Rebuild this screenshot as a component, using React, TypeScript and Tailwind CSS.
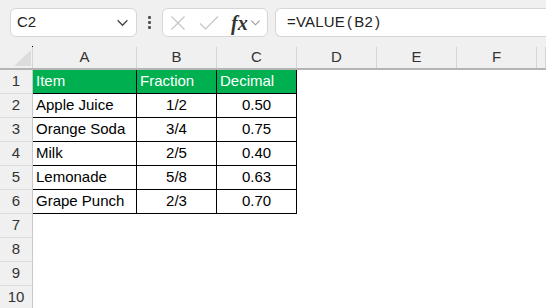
const cols = ["A", "B", "C", "D", "E", "F", ""];

const data = [
  ["Apple Juice", "1/2", "0.50"],
  ["Orange Soda", "3/4", "0.75"],
  ["Milk", "2/5", "0.40"],
  ["Lemonade", "5/8", "0.63"],
  ["Grape Punch", "2/3", "0.70"],
];

const XIcon = () => (
  <svg width="16" height="16" viewBox="0 0 16 16" fill="none" stroke="#c4c4c4" strokeWidth="1.1">
    <path d="M1.5 1.5 L14.5 14.5 M14.5 1.5 L1.5 14.5" />
  </svg>
);

const CheckIcon = () => (
  <svg width="20" height="16" viewBox="0 0 20 16" fill="none" stroke="#c4c4c4" strokeWidth="1.1">
    <path d="M1 8.5 L6.5 14 L19 1.5" />
  </svg>
);

const Chevron = ({ size = 12, color = "#555" }: { size?: number; color?: string }) => (
  <svg width={size} height={size} viewBox="0 0 12 12" fill="none" stroke={color} strokeWidth="1.2">
    <path d="M1.5 4 L6 8.5 L10.5 4" />
  </svg>
);

const Toolbar = () => (
  <div className="h-[47px] flex items-start pt-2 bg-[#f0f0f0]">
    {/* Name box */}
    <div className="ml-[10px] w-[127px] h-[29px] bg-white border border-[#d6d6d6] rounded-md flex items-center justify-between pl-[6px] pr-[7px]">
      <span className="text-[15px] text-[#222]">C2</span>
      <Chevron size={13} color="#444" />
    </div>
    {/* Kebab */}
    <div className="w-[25px] h-[29px] flex flex-col items-center justify-center gap-[2px]">
      <div className="w-[3px] h-[3px] bg-[#555] rounded-[1px]" />
      <div className="w-[3px] h-[3px] bg-[#555] rounded-[1px]" />
      <div className="w-[3px] h-[3px] bg-[#555] rounded-[1px]" />
    </div>
    {/* fx box */}
    <div className="w-[106px] h-[29px] bg-white border border-[#d6d6d6] rounded-md flex items-center pl-[7px] pr-[2px]">
      <XIcon />
      <div className="ml-[13px]">
        <CheckIcon />
      </div>
      <span
        className="ml-[12px] text-[20px] italic font-bold text-[#333] leading-none"
        style={{ fontFamily: '"Liberation Serif", serif' }}
      >
        fx
      </span>
      <div className="ml-[2px]">
        <Chevron size={11} color="#999" />
      </div>
    </div>
    {/* Formula bar */}
    <div className="ml-[7px] flex-1 h-[29px] bg-white border border-r-0 border-[#d6d6d6] rounded-l-md flex items-center pl-[11px]">
      <span className="text-[15px] text-[#222] tracking-[0.2px]">
        =VALUE<span className="mx-[2px]">(</span>B2<span className="mx-[2px]">)</span>
      </span>
    </div>
  </div>
);

const widths = ["w-[104px]", "w-[80px]", "w-[80px]", "w-[80px]", "w-[80px]", "w-[80px]", "flex-1"];

const HeaderRow = () => (
  <div className="flex h-[23px] bg-[#f0f0f0] border-b-2 border-[#b5b5b5]">
    <div className="w-[33px] shrink-0 relative border-r border-[#d4d4d4]">
      <div className="absolute -top-[1px] right-[-1px] w-[1px] h-[1px] bg-black" />
      <svg className="absolute left-[14px] top-[3px]" width="17" height="16" viewBox="0 0 17 16">
        <path d="M17 0 L17 16 L0 16 Z" fill="#dcdcdc" />
      </svg>
    </div>
    {cols.map((c, i) => (
      <div
        key={`col_${i}`}
        className={`${widths[i]} shrink-0 border-r border-[#d4d4d4] flex items-center justify-center text-[15px] text-[#333]`}
      >
        {c}
      </div>
    ))}
  </div>
);

const RowHead = ({ n }: { n: number }) => (
  <div className="w-[33px] shrink-0 bg-[#f0f0f0] border-r border-b border-r-[#c8c8c8] border-b-[#dcdcdc] flex items-center justify-center text-[15px] text-[#333]">
    {n}
  </div>
);

const Sheet = () => (
  <div>
    <HeaderRow />
    {/* Row 1: green header */}
    <div className="flex h-[24px]">
      <RowHead n={1} />
      {["Item", "Fraction", "Decimal"].map((t, i) => (
        <div
          key={t}
          className={`${widths[i]} shrink-0 bg-[#00b050] text-white text-[15px] border-r border-b border-black flex items-center pl-[3px]`}
        >
          {t}
        </div>
      ))}
    </div>
    {data.map((row, r) => (
      <div key={row[0]} className="flex h-[24px]">
        <RowHead n={r + 2} />
        <div className="w-[104px] shrink-0 border-r border-b border-black flex items-center pl-[3px] text-[15px] text-black">
          {row[0]}
        </div>
        <div className="w-[80px] shrink-0 border-r border-b border-black flex items-center justify-center text-[15px] text-black">
          {row[1]}
        </div>
        <div className="w-[80px] shrink-0 border-r border-b border-black flex items-center justify-center text-[15px] text-black">
          {row[2]}
        </div>
      </div>
    ))}
    {[7, 8, 9, 10].map((n) => (
      <div key={n} className="flex h-[24px]">
        <RowHead n={n} />
      </div>
    ))}
  </div>
);

export default function App() {
  return (
    <div
      className="w-[546px] h-[308px] overflow-hidden bg-white"
      style={{ fontFamily: '"Liberation Sans", Arial, sans-serif' }}
    >
      <Toolbar />
      <Sheet />
    </div>
  );
}
